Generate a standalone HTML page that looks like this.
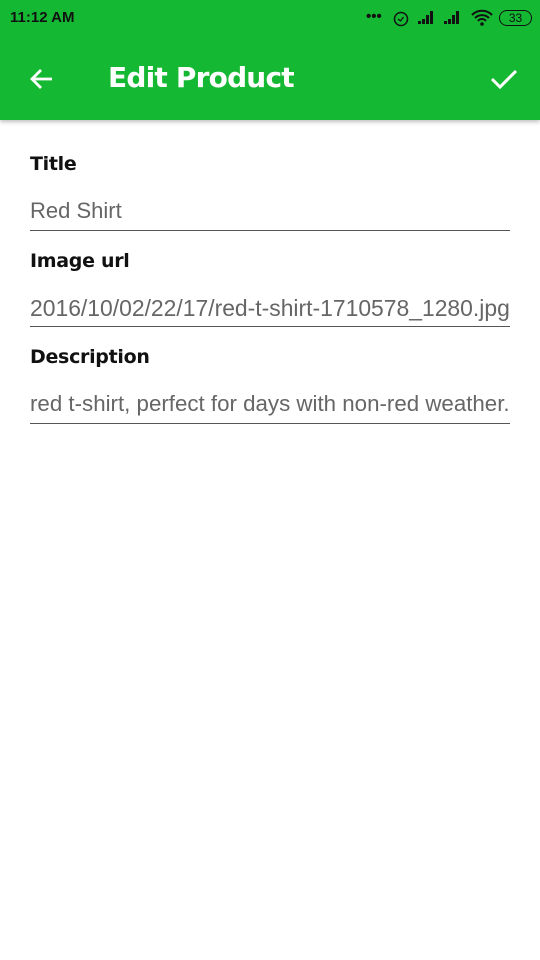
<!DOCTYPE html>
<html><head><style>
body{margin:0;width:540px;height:960px;background:#fff;font-family:"Liberation Sans",sans-serif;position:relative;overflow:hidden}
.bar{position:absolute;left:0;top:0;width:540px;height:120px;background:#15b833;box-shadow:0 2px 4px rgba(0,0,0,.25)}
.time{position:absolute;left:10px;top:9px;font-size:15px;font-weight:bold;color:#111}
.title{position:absolute;left:108px;top:61px;font-size:28px;font-weight:bold;color:#fff;font-family:"DejaVu Sans",sans-serif;letter-spacing:-0.8px}
.lbl{position:absolute;left:30px;font-size:19px;font-weight:bold;color:#111;font-family:"DejaVu Sans",sans-serif;letter-spacing:-0.3px}
.val{position:absolute;left:30px;width:480px;font-size:22px;color:#666;white-space:nowrap;overflow:hidden}
.line{position:absolute;left:30px;width:480px;height:1px;background:#555}
</style></head><body>
<div class="bar">
<div class="time">11:12 AM</div>
<div style="position:absolute;left:366px;top:8px;font-size:15px;color:#111;font-weight:bold">•••</div>
<svg style="position:absolute;left:392px;top:9px" width="18" height="18" viewBox="0 0 18 18"><circle cx="9" cy="10" r="6.5" fill="none" stroke="#111" stroke-width="1.5"/><path d="M6 10l2.5 2 3-4" fill="none" stroke="#111" stroke-width="1.3"/></svg>
<svg style="position:absolute;left:416px;top:10px" width="50" height="16"><path d="M2 14h3v-3H2zM6 14h3V9H6zM10 14h3V5h-3zM14 14h3V1h-3z M28 14h3v-3h-3zM32 14h3V9h-3zM36 14h3V5h-3zM40 14h3V1h-3z" fill="#111"/></svg>
<svg style="position:absolute;left:470px;top:9px" width="24" height="18" viewBox="0 0 24 18"><path d="M2 6a14 14 0 0 1 20 0M5 9a10 10 0 0 1 14 0M8 12a5 5 0 0 1 8 0" fill="none" stroke="#111" stroke-width="2"/><circle cx="12" cy="15" r="1.8" fill="#111"/></svg>
<div style="position:absolute;left:499px;top:10px;width:31px;height:14px;border:1.5px solid #111;border-radius:8px;font-size:12px;line-height:14px;text-align:center;color:#111">33</div>
<svg style="position:absolute;left:28px;top:65px" width="28" height="28" viewBox="0 0 28 28"><path d="M24 14H5M13 5l-9 9 9 9" fill="none" stroke="#fff" stroke-width="2.8"/></svg>
<svg style="position:absolute;left:488px;top:64px" width="32" height="30" viewBox="0 0 32 30"><path d="M4 15l8 8L28 7" fill="none" stroke="#fff" stroke-width="3"/></svg>
<div class="title">Edit Product</div>
</div>
<div class="lbl" style="top:153px">Title</div>
<div class="val" style="top:198px">Red Shirt</div>
<div class="line" style="top:230px"></div>
<div class="lbl" style="top:250px">Image url</div>
<div class="val" style="top:295px;font-size:22.9px">2016/10/02/22/17/red-t-shirt-1710578_1280.jpg</div>
<div class="line" style="top:326px"></div>
<div class="lbl" style="top:346px">Description</div>
<div class="val" style="top:391px;font-size:22.3px">red t-shirt, perfect for days with non-red weather.</div>
<div class="line" style="top:423px"></div>
</body></html>
